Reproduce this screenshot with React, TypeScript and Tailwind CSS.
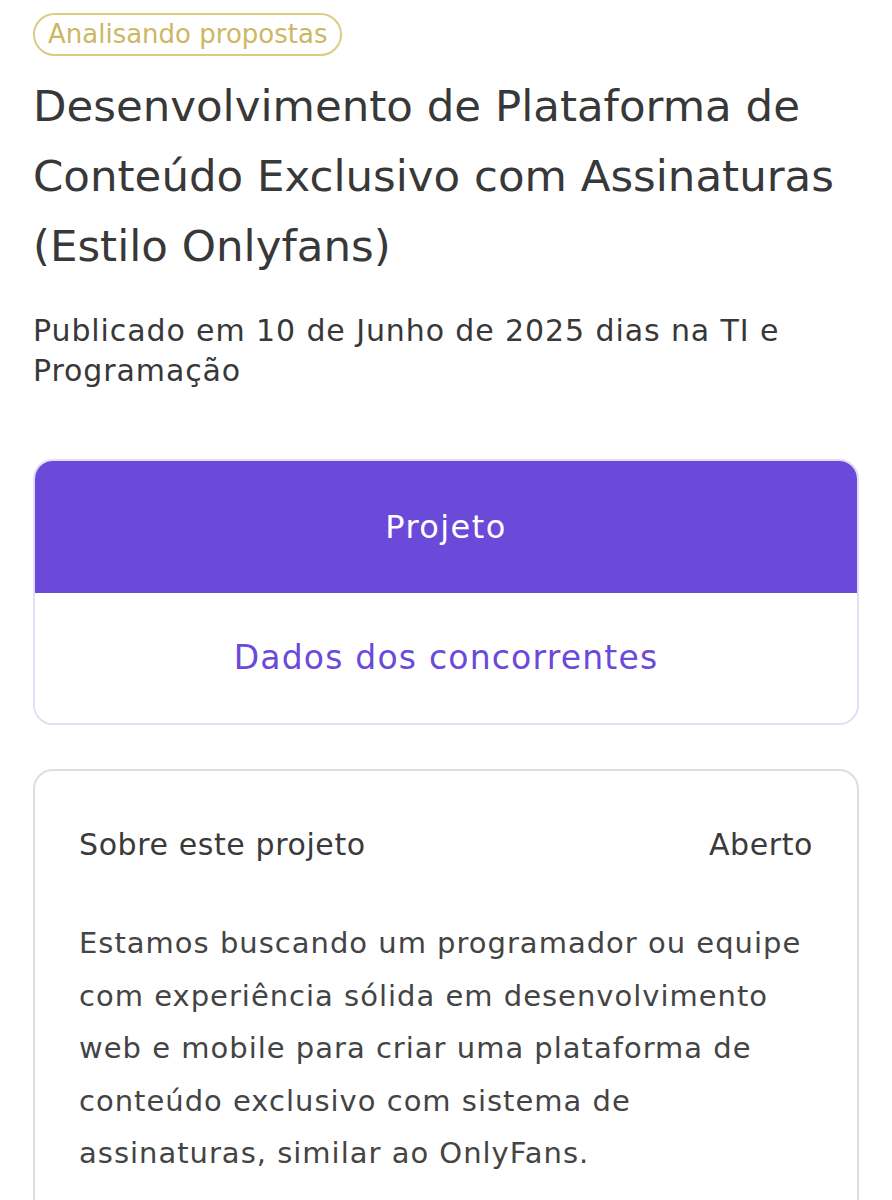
export default function App() {
  const font = { fontFamily: '"DejaVu Sans", "Open Sans", sans-serif' };
  return (
    <div className="min-h-screen bg-white px-[33px] pt-[13px] pb-10 text-[#3b3b3b]" style={font}>
      <div className="flex">
        <span className="h-[43px] rounded-full border-2 border-[#dccb83] px-[13px] text-[26px] leading-[39px] text-[#cdb763]">
          Analisando propostas
        </span>
      </div>

      <h1 className="mt-[15px] text-[43.5px] leading-[70px] text-[#383838]">
        Desenvolvimento de Plataforma de
        <br />
        Conteúdo Exclusivo com Assinaturas
        <br />
        (Estilo Onlyfans)
      </h1>

      <p className="mt-[30px] text-[30px] leading-[40px] tracking-[0.9px] text-[#383838]">
        Publicado em 10 de Junho de 2025 dias na TI e
        <br />
        Programação
      </p>

      <div className="mt-[68px] overflow-hidden rounded-[20px] border-2 border-[#e2dcf4]">
        <div className="flex h-[132px] items-center justify-center bg-[#6b49d9] text-[32px] tracking-[1.4px] text-white">
          Projeto
        </div>
        <div className="flex h-[130px] items-center justify-center bg-white text-[33px] tracking-[1.2px] text-[#6b49d9]">
          Dados dos concorrentes
        </div>
      </div>

      <div className="mt-[44px] rounded-[20px] border-2 border-[#dedede] px-[44px] pt-[54px] pb-10">
        <div className="flex items-center justify-between text-[30px] leading-[40px] tracking-[0.6px] text-[#3a3a3a]">
          <span>Sobre este projeto</span>
          <span>Aberto</span>
        </div>
        <p className="mt-[52px] text-[29px] leading-[52.5px] tracking-[1px] text-[#444444]">
          Estamos buscando um programador ou equipe
          <br />
          com experiência sólida em desenvolvimento
          <br />
          web e mobile para criar uma plataforma de
          <br />
          conteúdo exclusivo com sistema de
          <br />
          assinaturas, similar ao OnlyFans.
        </p>
      </div>
    </div>
  );
}
